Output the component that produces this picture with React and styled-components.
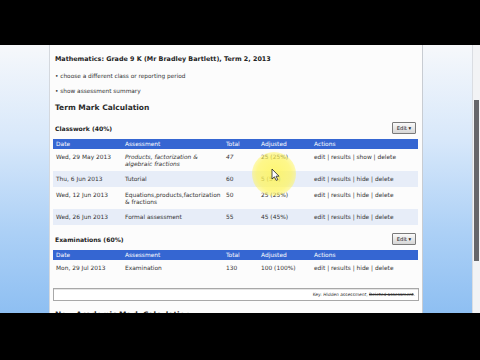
import React from 'react';
import styled, { createGlobalStyle } from 'styled-components';

const classwork = [
  { date: 'Wed, 29 May 2013', name: 'Products, factorization & algebraic fractions', total: '47', adjusted: '25 (25%)', toggle: 'show', hidden: true },
  { date: 'Thu, 6 Jun 2013', name: 'Tutorial', total: '60', adjusted: '5 (5%)', toggle: 'hide' },
  { date: 'Wed, 12 Jun 2013', name: 'Equations,products,factorization & fractions', total: '50', adjusted: '25 (25%)', toggle: 'hide' },
  { date: 'Wed, 26 Jun 2013', name: 'Formal assessment', total: '55', adjusted: '45 (45%)', toggle: 'hide' },
];

const exams = [
  { date: 'Mon, 29 Jul 2013', name: 'Examination', total: '130', adjusted: '100 (100%)', toggle: 'hide' },
];

const App = () => {
  return (
    <>
      <GlobalStyle />
      <Screen>
        <Letterbox $h={45} />
        <Viewport>
          <Gutter />
          <Panel>
            <Title>Mathematics: Grade 9 K (Mr Bradley Bartlett), Term 2, 2013</Title>
            <Bullet $gap={6}>• choose a different class or reporting period</Bullet>
            <Bullet $gap={5}>• show assessment summary</Bullet>
            <Heading $gap={5}>Term Mark Calculation</Heading>

            <Section title="Classwork (40%)" rows={classwork} gap={6} />
            <Section title="Examinations (60%)" rows={exams} gap={7} />

            <KeyBox>
              Key: <i>Hidden assessment</i>, <s>Deleted assessment</s>.
            </KeyBox>
            <Heading $gap={7}>New Academic Mark Calculation</Heading>
          </Panel>
          <Spacer />
          <Scrollbar>
            <Thumb />
          </Scrollbar>
        </Viewport>
        <Letterbox />

        <Glow />
        <Cursor width="9" height="13" viewBox="0 0 9 13">
          <path d="M1 1 L1 11 L3.4 8.8 L5.2 12.4 L6.8 11.6 L5 8.2 L8 8.2 Z" fill="#fff" stroke="#222" strokeWidth="0.8" strokeLinejoin="round" />
        </Cursor>
      </Screen>
    </>
  );
};

const Section = ({ title, rows, gap }) => (
  <>
    <SectionBar $gap={gap}>
      <SubHeading>{title}</SubHeading>
      <EditButton>Edit ▾</EditButton>
    </SectionBar>
    <Table>
      <colgroup>
        <col style={{ width: 69 }} />
        <col style={{ width: 101 }} />
        <col style={{ width: 35 }} />
        <col style={{ width: 53 }} />
        <col />
      </colgroup>
      <thead>
        <tr>
          <Th>Date</Th>
          <Th>Assessment</Th>
          <Th>Total</Th>
          <Th>Adjusted</Th>
          <Th>Actions</Th>
        </tr>
      </thead>
      <tbody>
        {rows.map((r, i) => (
          <Row key={r.date} $alt={i % 2 === 1}>
            <Td>{r.date}</Td>
            <Td $italic={r.hidden}>{r.name}</Td>
            <Td $italic={r.hidden}>{r.total}</Td>
            <Td>{r.adjusted}</Td>
            <Td>edit | results | {r.toggle} | delete</Td>
          </Row>
        ))}
      </tbody>
    </Table>
  </>
);

export default App;

// Estilos

const GlobalStyle = createGlobalStyle`
  html, body { margin: 0; padding: 0; background: #000; }
  body { font-family: "DejaVu Sans", Verdana, sans-serif; }
`;

const Screen = styled.div`
  position: relative;
  width: 480px;
  height: 360px;
  background: #000;
  display: flex;
  flex-direction: column;
  overflow: hidden;
`;

const Letterbox = styled.div`
  height: ${p => (p.$h ? `${p.$h}px` : 'auto')};
  flex: ${p => (p.$h ? 'none' : '1')};
  background: #000;
`;

const Viewport = styled.div`
  height: 268px;
  display: flex;
  overflow: hidden;
  background: linear-gradient(to bottom, #f6f8fb 0%, #d8e8fa 35%, #acd0f6 70%, #8ebff2 100%);
`;

const Gutter = styled.div`
  width: 49px;
  flex: none;
`;

const Spacer = styled.div`
  flex: 1;
`;

const Panel = styled.div`
  width: 366px;
  flex: none;
  background: #fcfcfc;
  border-left: 1px solid #d4d8de;
  border-right: 1px solid #c8ccd2;
  padding: 8px 3px 0 3px;
  color: #2a2a2a;
`;

const Title = styled.div`
  font-size: 6.4px;
  font-weight: bold;
  line-height: 12px;
  padding-left: 2px;
  color: #222;
`;

const Bullet = styled.div`
  font-size: 5.8px;
  line-height: 10px;
  margin-top: ${p => p.$gap}px;
  padding-left: 2px;
  color: #333;
`;

const Heading = styled.div`
  font-size: 7.5px;
  font-weight: bold;
  line-height: 14px;
  margin-top: ${p => p.$gap}px;
  padding-left: 2px;
  color: #2b2b2b;
`;

const SectionBar = styled.div`
  display: flex;
  align-items: center;
  justify-content: space-between;
  height: 14px;
  margin-top: ${p => p.$gap}px;
  margin-bottom: 4px;
  padding: 0 3px 0 2px;
`;

const SubHeading = styled.div`
  font-size: 6.1px;
  font-weight: bold;
  color: #222;
`;

const EditButton = styled.div`
  width: 22px;
  height: 10px;
  border: 1px solid #7a7a7a;
  border-radius: 1px;
  background: linear-gradient(to bottom, #fafafa, #d6d6d6);
  font-size: 5.2px;
  line-height: 10px;
  text-align: center;
  color: #222;
`;

const Table = styled.table`
  width: 365px;
  border-collapse: collapse;
  table-layout: fixed;
  font-size: 5.9px;
`;

const Th = styled.th`
  background: #3566d2;
  color: #fff;
  font-weight: normal;
  text-align: left;
  height: 10px;
  padding: 0 3px;
  line-height: 10px;
`;

const Row = styled.tr`
  height: 16px;
  background: ${p => (p.$alt ? '#e7edf8' : 'transparent')};
`;

const Td = styled.td`
  padding: 5px 3px 3px;
  line-height: 7px;
  vertical-align: top;
  color: #333;
  font-style: ${p => (p.$italic ? 'italic' : 'normal')};
`;

const KeyBox = styled.div`
  margin-top: 12px;
  height: 11px;
  border: 1px solid #a8a8a8;
  box-shadow: inset 0 1px 0 #e4e4e4;
  background: #fff;
  font-size: 4.4px;
  line-height: 11px;
  text-align: right;
  padding-right: 3px;
  color: #333;
  i { font-style: italic; }
`;

const Scrollbar = styled.div`
  width: 7px;
  flex: none;
  background: #f2f3f5;
  border-left: 1px solid #dadde2;
  position: relative;
`;

const Thumb = styled.div`
  position: absolute;
  top: 55px;
  left: 1px;
  width: 5px;
  height: 161px;
  background: #66666a;
`;

const Glow = styled.div`
  position: absolute;
  left: 252px;
  top: 152px;
  width: 44px;
  height: 44px;
  border-radius: 50%;
  background: radial-gradient(circle, rgba(255, 245, 90, 0.85) 0%, rgba(255, 245, 90, 0.7) 55%, rgba(255, 245, 90, 0) 100%);
  pointer-events: none;
`;

const Cursor = styled.svg`
  position: absolute;
  left: 271px;
  top: 168px;
`;
